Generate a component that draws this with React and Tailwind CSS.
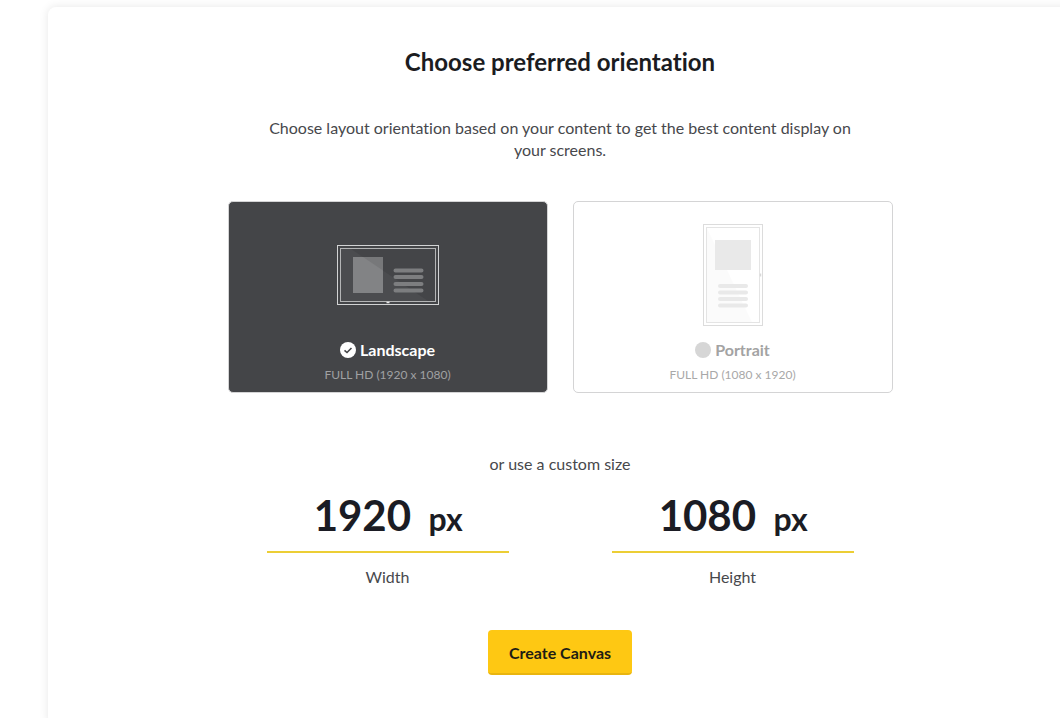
import { useState } from 'react';

const PRESETS = {
    landscape: { width: '1920', height: '1080' },
    portrait: { width: '1080', height: '1920' }
};

function LandscapeScreen() {
    return (
        <svg width="102" height="60" viewBox="0 0 102 60" fill="none" aria-hidden="true">
            <path d="M4 4H14L91 56H4Z" fill="#fff" fillOpacity="0.04" />
            <rect x="0.5" y="0.5" width="101" height="59" stroke="#d2d3d4" />
            <rect x="3.5" y="3.5" width="95" height="53" stroke="#b4b5b6" />
            <rect x="16" y="12" width="30" height="36" fill="#828385" />
            <path d="M26 12H46V25.600Z" fill="#77787a" />
            <g stroke="#7d7e80" strokeWidth="4" strokeLinecap="round">
                <path d="M58.500 25.500H84.500M58.500 32H84.500M58.500 39H84.500M58.500 45.500H84.500" />
            </g>
            <path d="M49.500 57.500H52.500" stroke="#e8e8e8" strokeWidth="1.500" />
        </svg>
    );
}

function PortraitScreen() {
    return (
        <svg width="60" height="102" viewBox="0 0 60 102" fill="none" aria-hidden="true">
            <path d="M4 4V98H49Z" fill="#000" fillOpacity="0.015" />
            <rect x="0.5" y="0.5" width="59" height="101" stroke="#dcdcdc" />
            <rect x="3.5" y="3.5" width="53" height="95" stroke="#e4e4e4" />
            <rect x="12" y="16" width="36" height="30" fill="#e9e9e9" />
            <g stroke="#e9e9e9" strokeWidth="4" strokeLinecap="round">
                <path d="M17 62H43M17 68.500H43M17 75H43M17 81.500H43" />
            </g>
            <path d="M57.500 49.500V52.500" stroke="#d8d8d8" strokeWidth="1.500" />
        </svg>
    );
}

function OrientationCard({ value, title, size, selected, onSelect, children }) {
    return (
        <label
            className={`flex h-48 cursor-pointer flex-col items-center rounded-[5px] border ${
                selected ? 'border-[#d4d4d5] bg-[#444548]' : 'border-[#d4d4d5] bg-white'
            }`}
        >
            <span className="flex h-[146px] items-center">{children}</span>
            <span className="-mt-2.5 flex items-center gap-1">
                <span className="grid">
                    <input
                        type="radio"
                        name="orientation"
                        value={value}
                        checked={selected}
                        onChange={() => onSelect(value)}
                        className={`col-start-1 row-start-1 size-4 appearance-none rounded-full ${
                            selected ? 'bg-white' : 'bg-[#d6d6d6]'
                        }`}
                    />
                    {selected && (
                        <svg className="pointer-events-none col-start-1 row-start-1" width="16" height="16" viewBox="0 0 16 16" fill="none">
                            <path d="M4.500 8.300L7 10.500L11.500 6" stroke="#444548" strokeWidth="1.600" />
                        </svg>
                    )}
                </span>
                <span className={`text-base leading-6 font-bold ${selected ? 'text-white' : 'text-[#a3a3a3]'}`}>
                    {title}
                </span>
            </span>
            <span className={`mt-[3px] text-xs leading-5 ${selected ? 'text-[#a0a1a3]' : 'text-[#a8a8a8]'}`}>
                {size}
            </span>
        </label>
    );
}

function SizeField({ id, label, value, onChange }) {
    return (
        <div className="flex flex-col items-center px-[39px]">
            <div className="flex w-full items-baseline justify-center gap-4 border-b-2 border-[#ecce35] pb-[9px] font-bold text-[#1b1c24]">
                <input
                    id={id}
                    type="text"
                    inputMode="numeric"
                    value={value}
                    onChange={(e) => onChange(e.target.value)}
                    className="w-[100px] text-center text-[42px] leading-[54px] outline-none"
                />
                <span className="text-[32px] leading-10">px</span>
            </div>
            <label htmlFor={id} className="mt-[13px] text-base leading-[22px]">{label}</label>
        </div>
    );
}

export default function App() {
    const [orientation, setOrientation] = useState('landscape');
    const [size, setSize] = useState(PRESETS.landscape);

    const handleSelect = (value) => {
        setOrientation(value);
        setSize(PRESETS[value]);
    };

    return (
        <div className="min-h-screen overflow-hidden bg-white pt-[7px] pl-12 font-['Lato',sans-serif] text-[#47484c] [font-variant-ligatures:none]">
            <main className="-mr-3 min-h-screen rounded-lg bg-white px-6 pt-[39px] shadow-[0_0_10px_rgba(0,0,0,0.1)]">
                <form className="mx-auto flex max-w-[665px] flex-col items-center" onSubmit={(e) => e.preventDefault()}>
                    <h1 className="text-2xl leading-8 font-bold text-[#1b1c1f]">Choose preferred orientation</h1>
                    <p className="mt-[39px] max-w-[600px] text-center text-base leading-[22px]">
                        Choose layout orientation based on your content to get the best content display on your screens.
                    </p>

                    {/* Orientation presets */}
                    <div className="mt-10 grid w-full grid-cols-2 gap-[25px]">
                        <OrientationCard
                            value="landscape"
                            title="Landscape"
                            size="FULL HD (1920 x 1080)"
                            selected={orientation === 'landscape'}
                            onSelect={handleSelect}
                        >
                            <LandscapeScreen />
                        </OrientationCard>
                        <OrientationCard
                            value="portrait"
                            title="Portrait"
                            size="FULL HD (1080 x 1920)"
                            selected={orientation === 'portrait'}
                            onSelect={handleSelect}
                        >
                            <PortraitScreen />
                        </OrientationCard>
                    </div>

                    {/* Custom size */}
                    <p className="mt-[60px] text-base leading-[22px]">or use a custom size</p>
                    <div className="mt-[13px] grid w-full grid-cols-2 gap-[25px]">
                        <SizeField
                            id="canvas-width"
                            label="Width"
                            value={size.width}
                            onChange={(width) => setSize({ ...size, width })}
                        />
                        <SizeField
                            id="canvas-height"
                            label="Height"
                            value={size.height}
                            onChange={(height) => setSize({ ...size, height })}
                        />
                    </div>

                    <button
                        type="submit"
                        className="mt-[42px] cursor-pointer rounded-[4px] border-b-2 border-[#e9b50f] bg-[#fec813] px-[21px] pt-3 pb-[9px] text-base leading-[22px] font-bold text-[#1f1c14]"
                    >
                        Create Canvas
                    </button>
                </form>
            </main>
        </div>
    );
}
